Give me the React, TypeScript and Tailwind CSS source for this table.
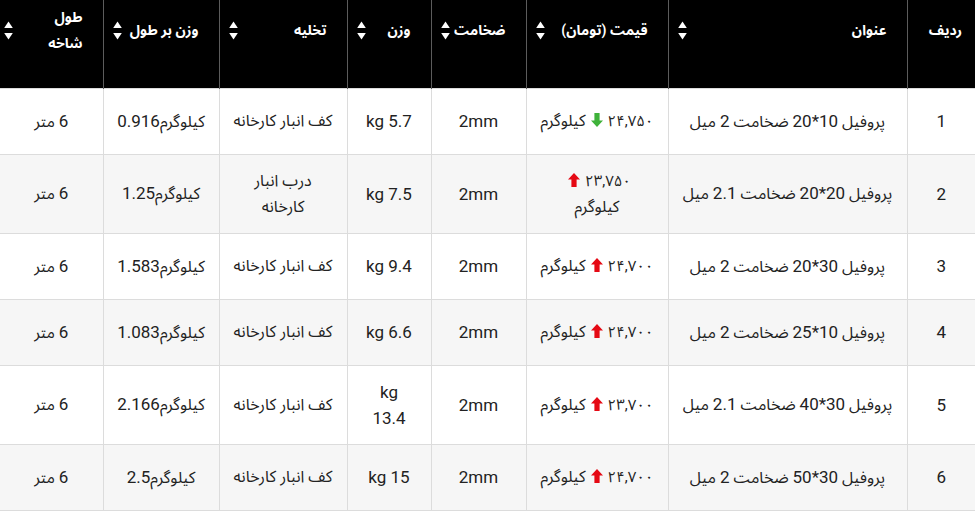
import React from 'react';

type Row = {
  n: string;
  title: string;
  price: string;
  up: boolean;
  priceBreak?: boolean;
  weight: string[];
  unload: string[];
  wpl: string;
};

const rows: Row[] = [
  { n: '1', title: 'پروفیل 10*20 ضخامت 2 میل', price: '۲۴,۷۵۰', up: false, weight: ['kg 5.7'], unload: ['کف انبار کارخانه'], wpl: 'کیلوگرم0.916' },
  { n: '2', title: 'پروفیل 20*20 ضخامت 2.1 میل', price: '۲۳,۷۵۰', up: true, priceBreak: true, weight: ['kg 7.5'], unload: ['درب انبار', 'کارخانه'], wpl: 'کیلوگرم1.25' },
  { n: '3', title: 'پروفیل 30*20 ضخامت 2 میل', price: '۲۴,۷۰۰', up: true, weight: ['kg 9.4'], unload: ['کف انبار کارخانه'], wpl: 'کیلوگرم1.583' },
  { n: '4', title: 'پروفیل 10*25 ضخامت 2 میل', price: '۲۴,۷۰۰', up: true, weight: ['kg 6.6'], unload: ['کف انبار کارخانه'], wpl: 'کیلوگرم1.083' },
  { n: '5', title: 'پروفیل 30*40 ضخامت 2.1 میل', price: '۲۳,۷۰۰', up: true, weight: ['kg', '13.4'], unload: ['کف انبار کارخانه'], wpl: 'کیلوگرم2.166' },
  { n: '6', title: 'پروفیل 30*50 ضخامت 2 میل', price: '۲۴,۷۰۰', up: true, weight: ['kg 15'], unload: ['کف انبار کارخانه'], wpl: 'کیلوگرم2.5' },
];

// Latin runs (digits, letters, dot, star) rendered slightly larger, like the reference's Roboto
const Mixed = ({ text }: { text: string }) => {
  const parts = text.split(/([A-Za-z0-9.*]+(?: [A-Za-z0-9.*]+)*)/);
  return (
    <>
      {parts.map((p, i) =>
        /[A-Za-z0-9]/.test(p) ? (
          <span key={i} className="text-[17px]">
            {p}
          </span>
        ) : (
          <React.Fragment key={i}>{p}</React.Fragment>
        )
      )}
    </>
  );
};

const SortIcon = () => (
  <svg width="9" height="19" viewBox="0 0 9 19" className="absolute top-[21px] left-[9px]">
    <path d="M4.5 0.5 L8.8 7 H0.2 Z" fill="white" />
    <path d="M0.2 12 H8.8 L4.5 18.5 Z" fill="white" />
  </svg>
);

const SortIconLast = () => (
  <svg width="9" height="19" viewBox="0 0 9 19" className="absolute top-[21px] left-[4px]">
    <path d="M4.5 0.5 L8.8 7 H0.2 Z" fill="white" />
    <path d="M0.2 12 H8.8 L4.5 18.5 Z" fill="white" />
  </svg>
);

const Arrow = ({ up }: { up: boolean }) =>
  up ? (
    <svg width="12" height="14" viewBox="0 0 12 14" className="inline-block align-[-1px] mx-[5px]">
      <path d="M6 0 L12 6.5 H8.6 V14 H3.4 V6.5 H0 Z" fill="#e50914" />
    </svg>
  ) : (
    <svg width="12" height="14" viewBox="0 0 12 14" className="inline-block align-[-1px] mx-[5px]">
      <path d="M6 14 L12 7.5 H8.6 V0 H3.4 V7.5 H0 Z" fill="#3fb23a" />
    </svg>
  );

const headers: { label: string[]; sort: boolean; pr: string }[] = [
  { label: ['ردیف'], sort: false, pr: 'pr-[13px]' },
  { label: ['عنوان'], sort: true, pr: 'pr-5' },
  { label: ['قیمت (تومان)'], sort: true, pr: 'pr-5' },
  { label: ['ضخامت'], sort: true, pr: 'pr-5' },
  { label: ['وزن'], sort: true, pr: 'pr-5' },
  { label: ['تخلیه'], sort: true, pr: 'pr-5' },
  { label: ['وزن بر طول'], sort: true, pr: 'pr-5' },
  { label: ['طول', 'شاخه'], sort: true, pr: 'pr-5' },
];

const td = 'border border-[#dcdcdc] h-[66px] py-[13px] px-1 text-center align-middle leading-[26px] whitespace-nowrap';

export default function App() {
  return (
    <div
      className="w-[975px] h-[512px] overflow-hidden bg-white"
      style={{ fontFamily: 'Roboto, "Noto Sans Arabic", "DejaVu Sans", sans-serif' }}
    >
      <table dir="rtl" className="w-[975px] table-fixed border-collapse text-[16px] text-[#222]">
        <colgroup>
          <col className="w-[68px]" />
          <col className="w-[239px]" />
          <col className="w-[142px]" />
          <col className="w-[95px]" />
          <col className="w-[84px]" />
          <col className="w-[128px]" />
          <col className="w-[116px]" />
          <col className="w-[103px]" />
        </colgroup>
        <thead>
          <tr className="bg-black">
            {headers.map((h, i) => (
              <th
                key={i}
                className={`relative h-[88px] p-0 align-top border-x border-[#5c5c5c] text-white text-[14px] font-bold ${i === 0 ? 'border-r-0' : ''} ${i === 7 ? 'border-l-0' : ''}`}
              >
                <div className={`h-[60px] flex flex-col justify-center text-right leading-[26px] whitespace-nowrap ${h.pr}`}>
                  {h.label.map((l, j) => (
                    <div key={j}>{l}</div>
                  ))}
                </div>
                {h.sort && (i === 7 ? <SortIconLast /> : <SortIcon />)}
              </th>
            ))}
          </tr>
        </thead>
        <tbody>
          {rows.map((r, i) => (
            <tr key={r.n} className={i % 2 === 1 ? 'bg-[#f6f6f6]' : 'bg-white'}>
              <td className={`${td} border-r-0 text-[17px]`}>{r.n}</td>
              <td className={td}>
                <Mixed text={r.title} />
              </td>
              <td className={td}>
                {r.priceBreak ? (
                  <>
                    <div>
                      <span className="text-[15px]">{r.price}</span>
                      <Arrow up={r.up} />
                    </div>
                    <div>کیلوگرم</div>
                  </>
                ) : (
                  <div>
                    <span className="text-[15px]">{r.price}</span>
                    <Arrow up={r.up} />
                    <span>کیلوگرم</span>
                  </div>
                )}
              </td>
              <td className={`${td} text-[17px]`}>2mm</td>
              <td className={`${td} text-[17px]`}>
                {r.weight.map((w, j) => (
                  <div key={j}>{w}</div>
                ))}
              </td>
              <td className={td}>
                {r.unload.map((w, j) => (
                  <div key={j}>{w}</div>
                ))}
              </td>
              <td className={td}>
                <Mixed text={r.wpl} />
              </td>
              <td className={`${td} border-l-0`}>
                <Mixed text="6 متر" />
              </td>
            </tr>
          ))}
        </tbody>
      </table>
    </div>
  );
}
